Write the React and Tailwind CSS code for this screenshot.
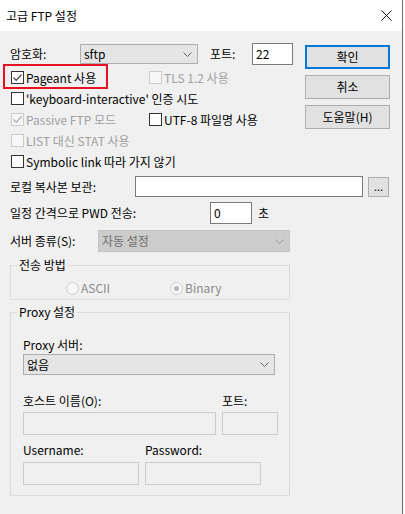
import React from "react";

const FONT = "font-['Noto_Sans_CJK_KR','Noto_Sans',sans-serif]";

function Chevron({ disabled }) {
  return (
    <svg width="9" height="5" viewBox="0 0 9 5" className="shrink-0">
      <path d="M0.5 0.5 L4.5 4.5 L8.5 0.5" fill="none" stroke={disabled ? "#9a9a9a" : "#606060"} strokeWidth="1" />
    </svg>
  );
}

function Check({ color }) {
  return (
    <svg width="11" height="11" viewBox="0 0 11 11">
      <path d="M1.5 5.5 L4.2 8.3 L9.5 2.5" fill="none" stroke={color} strokeWidth="1.2" />
    </svg>
  );
}

function Checkbox({ label, checked, disabled, className = "" }) {
  return (
    <div className={`flex items-center h-[21px] ${className}`}>
      <span
        className={`w-[13px] h-[13px] flex items-center justify-center border ${
          disabled ? "border-[#cccccc] bg-[#f7f7f7]" : "border-[#333333] bg-white"
        }`}
      >
        {checked && <Check color={disabled ? "#a8a8a8" : "#444444"} />}
      </span>
      <span className={`ml-[2px] ${disabled ? "text-[#a0a0a0]" : "text-black"}`}>{label}</span>
    </div>
  );
}

function Radio({ label, checked }) {
  return (
    <div className="flex items-center h-[16px]">
      <span className="w-[13px] h-[13px] rounded-full border border-[#cccccc] bg-[#f7f7f7] flex items-center justify-center">
        {checked && <span className="w-[5px] h-[5px] rounded-full bg-[#b5b5b5]" />}
      </span>
      <span className="ml-[2px] text-[#8a8a8a]">{label}</span>
    </div>
  );
}

function Button({ children, primary }) {
  return (
    <div
      className={`w-[85px] h-[24px] flex items-center justify-center bg-[#e1e1e1] ${
        primary ? "border-2 border-[#0078d7]" : "border border-[#adadad]"
      }`}
    >
      {children}
    </div>
  );
}

export default function App() {
  return (
    <div className={`${FONT} text-[12px] leading-[16px] text-black w-[405px] h-[514px] bg-white`}>
      <div className="w-[403px] h-[514px] border-r border-[#6b6b6b] flex flex-col">
        {/* title bar */}
        <div className="h-[31px] bg-white flex items-center justify-between pl-[6px] pr-[10px] shrink-0">
          <span className="text-[12px]">고급 FTP 설정</span>
          <svg width="11" height="11" viewBox="0 0 11 11">
            <path d="M0.5 0.5 L10.5 10.5 M10.5 0.5 L0.5 10.5" stroke="#111" strokeWidth="1" />
          </svg>
        </div>

        <div className="flex-1 bg-[#f0f0f0] pl-[10px] pt-[12px]">
          {/* top area */}
          <div className="flex">
            <div className="w-[295px]">
              <div className="flex items-center h-[22px]">
                <span className="w-[70px]">암호화:</span>
                <div className="w-[118px] h-[20px] bg-[#e5e5e5] border border-[#adadad] flex items-center justify-between pl-[3px] pr-[5px]">
                  <span>sftp</span>
                  <Chevron />
                </div>
                <span className="ml-[12px] w-[42px]">포트:</span>
                <div className="w-[41px] h-[22px] bg-white border border-[#7a7a7a] flex items-center pl-[3px]">22</div>
              </div>

              <div className="mt-[2px]">
                <div className="flex relative">
                  <div className="absolute left-[-7px] top-[-3px] w-[105px] h-[25px] border-2 border-[#e81123]" />
                  <Checkbox label="Pageant 사용" checked className="w-[139px] pl-[1px]" />
                  <Checkbox label="TLS 1.2 사용" disabled />
                </div>
                <Checkbox label="'keyboard-interactive' 인증 시도" className="pl-[1px]" />
                <div className="flex">
                  <Checkbox label="Passive FTP 모드" checked disabled className="w-[139px] pl-[1px]" />
                  <Checkbox label="UTF-8 파일명 사용" />
                </div>
                <Checkbox label="LIST 대신 STAT 사용" disabled className="pl-[1px]" />
              </div>
            </div>

            <div className="flex flex-col gap-[6px] pt-[2px]">
              <Button primary>확인</Button>
              <Button>취소</Button>
              <Button>도움말(H)</Button>
            </div>
          </div>

          <Checkbox label="Symbolic link 따라 가지 않기" className="pl-[1px]" />

          <div className="flex items-center mt-[4px]">
            <span className="w-[125px]">로컬 복사본 보관:</span>
            <div className="w-[228px] h-[21px] bg-white border border-[#7a7a7a]" />
            <div className="ml-[5px] w-[21px] h-[20px] bg-[#e1e1e1] border border-[#adadad] flex items-center justify-center text-[11px] leading-[10px] pb-[2px]">
              ...
            </div>
          </div>

          <div className="flex items-center mt-[5px]">
            <span className="w-[200px]">일정 간격으로 PWD 전송:</span>
            <div className="w-[42px] h-[22px] bg-white border border-[#7a7a7a] flex items-center pl-[3px]">0</div>
            <span className="ml-[6px]">초</span>
          </div>

          <div className="flex items-center mt-[6px]">
            <span className="w-[88px]">서버 종류(S):</span>
            <div className="w-[192px] h-[22px] bg-[#cccccc] border border-[#c4c4c4] flex items-center justify-between pl-[3px] pr-[5px] text-[#6d6d6d]">
              <span>자동 설정</span>
              <Chevron disabled />
            </div>
          </div>

          <fieldset className="w-[280px] mt-[5px] border border-[#dcdcdc] pb-[3px]">
            <legend className="ml-[6px] px-[2px]">전송 방법</legend>
            <div className="flex mt-[7px]">
              <div className="ml-[55px] w-[104px]">
                <Radio label="ASCII" />
              </div>
              <Radio label="Binary" checked />
            </div>
          </fieldset>

          <fieldset className="w-[280px] mt-[4px] border border-[#dcdcdc] pb-[10px]">
            <legend className="ml-[6px] px-[2px]">Proxy 설정</legend>
            <div className="pl-[12px]">
              <div className="mt-[17px]">Proxy 서버:</div>
              <div className="mt-[1px] w-[252px] h-[21px] bg-[#e5e5e5] border border-[#adadad] flex items-center justify-between pl-[3px] pr-[5px]">
                <span>없음</span>
                <Chevron />
              </div>
              <div className="flex mt-[18px]">
                <span className="w-[199px]">호스트 이름(O):</span>
                <span>포트:</span>
              </div>
              <div className="flex mt-[3px] gap-[6px]">
                <div className="w-[193px] h-[23px] border border-[#cccccc] bg-[#f0f0f0]" />
                <div className="w-[56px] h-[23px] border border-[#cccccc] bg-[#f0f0f0]" />
              </div>
              <div className="flex mt-[7px]">
                <span className="w-[122px]">Username:</span>
                <span>Password:</span>
              </div>
              <div className="flex mt-[4px] gap-[6px]">
                <div className="w-[116px] h-[23px] border border-[#cccccc] bg-[#f0f0f0]" />
                <div className="w-[116px] h-[23px] border border-[#cccccc] bg-[#f0f0f0]" />
              </div>
            </div>
          </fieldset>
        </div>
      </div>
    </div>
  );
}
